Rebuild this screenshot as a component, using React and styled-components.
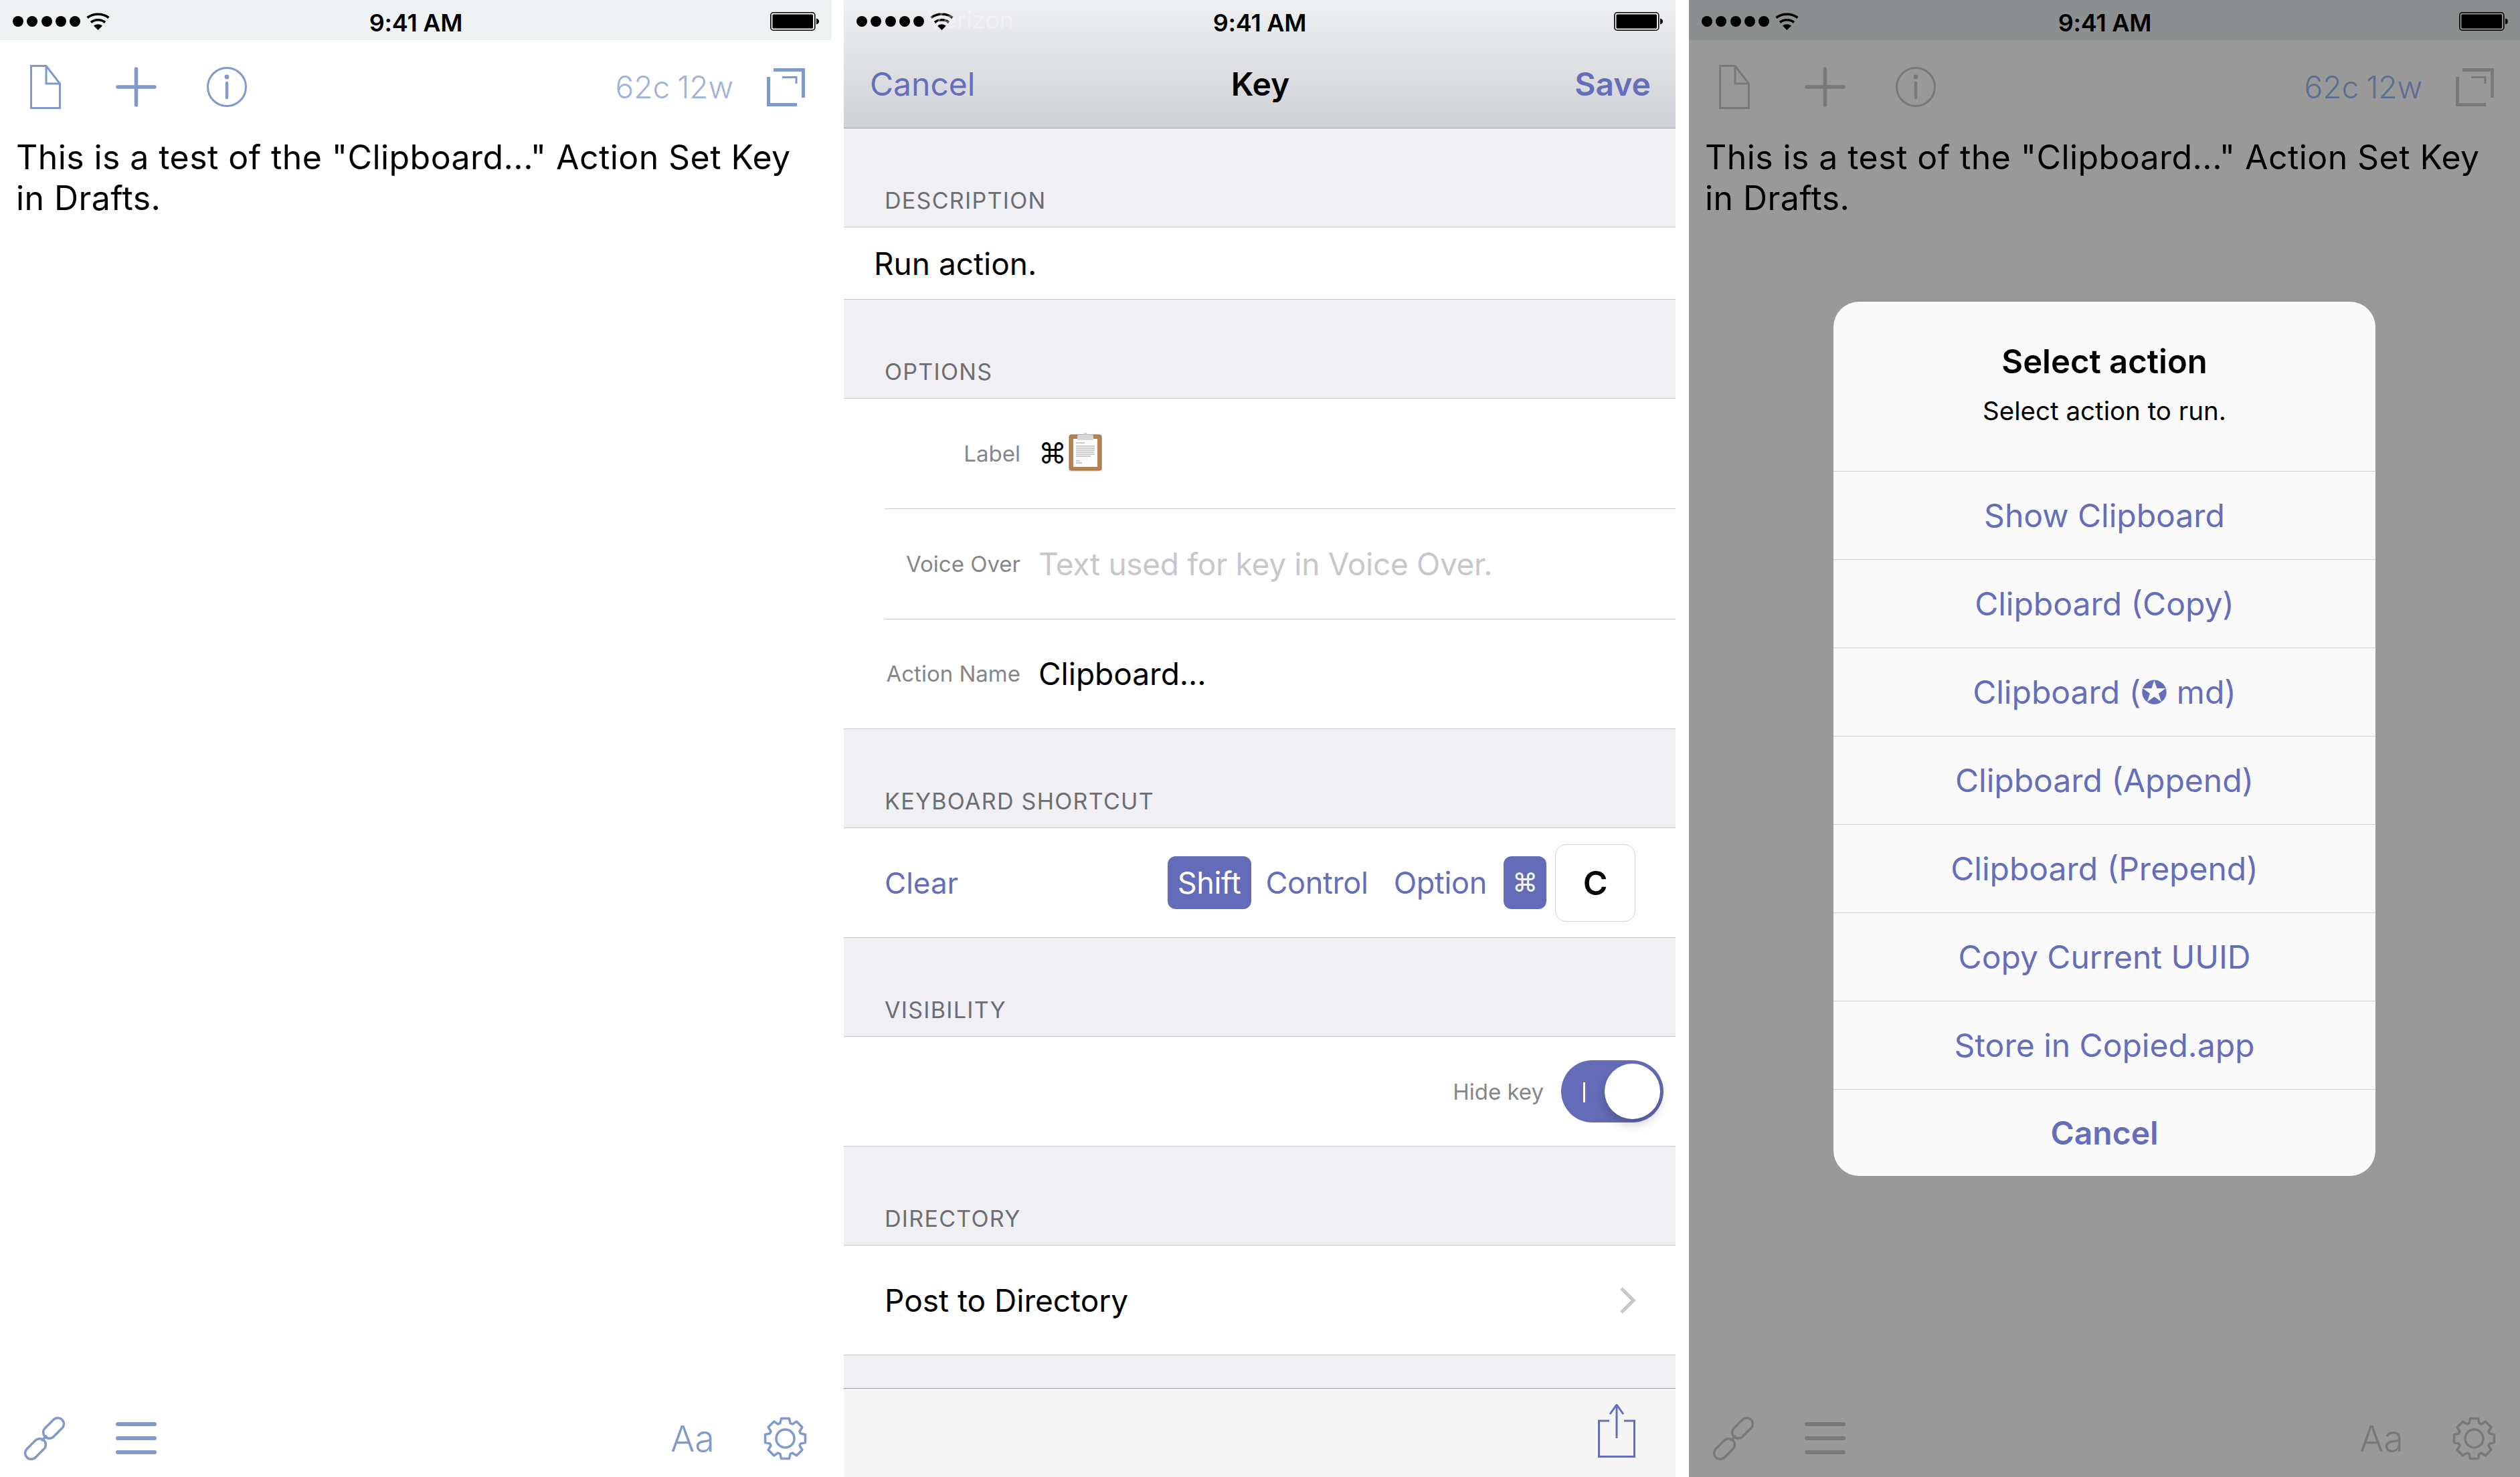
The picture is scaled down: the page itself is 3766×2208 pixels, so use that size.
import React from "react";
import styled, { createGlobalStyle } from "styled-components";

const TINT = "#7f9acb";
const DIM_TINT = "#cacaca";
const PURPLE = "#646ebb";
const LINE = "#c8c7cc";

const Global = createGlobalStyle`
  * { box-sizing: border-box; }
  html, body { margin: 0; padding: 0; background: #fff; }
  body { font-family: Inter, "Noto Sans", "DejaVu Sans", sans-serif; color: #000; }
`;

const Page = styled.div`
  width: 3766px;
  height: 2208px;
  display: flex;
  overflow: hidden;
  background: #fff;
`;

const Phone = styled.div`
  position: relative;
  flex: none;
  width: 1243px;
  margin-left: ${(p) => p.$gap || 0}px;
  height: 2208px;
  display: flex;
  flex-direction: column;
  background: #fff;
  overflow: hidden;
`;

/* status bar */
const Status = styled.div`
  position: relative;
  height: 60px;
  flex: none;
  padding: 0 19px;
  display: grid;
  grid-template-columns: 1fr auto 1fr;
  align-items: center;
  background: ${(p) => p.$bg || "transparent"};
`;

const Signal = styled.div`
  display: flex;
  align-items: center;
  gap: 5.3px;
  svg { margin-left: 4px; margin-top: -2px; }
`;

const Dot = styled.span`
  width: 16px;
  height: 16px;
  border-radius: 50%;
  background: #000;
`;

const Clock = styled.div`
  font-size: 36px;
  font-weight: 600;
  letter-spacing: -0.2px;
  line-height: 60px;
  padding-top: 4px;
`;

const Ghost = styled.span`
  position: absolute;
  left: 125px;
  top: 8px;
  font-size: 36px;
  color: rgba(255, 255, 255, 0.35);
`;

const BatterySlot = styled.div`
  justify-self: end;
  display: flex;
`;

const StatusBar = ({ bg, ghost }) => (
  <Status $bg={bg}>
    {ghost && <Ghost>Verizon</Ghost>}
    <Signal>
      <Dot /><Dot /><Dot /><Dot /><Dot />
      <svg width="36" height="27" viewBox="0 0 36 27">
        <path d="M1.5 8.5C10 1.5 25 1.5 33.5 8.5M7 15.5C13 10.5 22 10.5 28 15.5" fill="none" stroke="#000" strokeWidth="3.6" />
        <path d="M11 20.5C15 17.5 20 17.5 24 20.5L17.5 27Z" fill="#000" />
      </svg>
    </Signal>
    <Clock>9:41 AM</Clock>
    <BatterySlot>
      <svg width="73" height="28" viewBox="0 0 73 28">
        <rect x="0.8" y="0.8" width="66" height="26.4" rx="4" fill="none" stroke="#000" strokeWidth="1.6" />
        <rect x="3.5" y="3.5" width="60.5" height="21" rx="1.5" fill="#000" />
        <path d="M69 9.5C71.5 10 73 12 73 14C73 16 71.5 18 69 18.5Z" fill="#000" />
      </svg>
    </BatterySlot>
  </Status>
);

/* drafts editor */
const TopBar = styled.div`
  height: 140px;
  flex: none;
  display: flex;
  align-items: center;
  padding: 0 40px 0 45px;
`;

const IconGroup = styled.div`
  display: flex;
  align-items: center;
  gap: ${(p) => p.$gap}px;
`;

const Counter = styled.div`
  margin-left: auto;
  margin-right: 50px;
  font-size: 46px;
  font-weight: 300;
  letter-spacing: 0;
  word-spacing: -2px;
  color: ${(p) => p.$color};
`;

const Draft = styled.div`
  padding: 5px 40px 0 24px;
  font-size: 50px;
  line-height: 61px;
  letter-spacing: 0.42px;
`;

const BottomBar = styled.div`
  margin-top: auto;
  height: 116px;
  flex: none;
  display: flex;
  align-items: center;
  justify-content: space-between;
  padding: 0 36px 0 33px;
`;

const FontButton = styled.span`
  font-size: 54px;
  font-weight: 300;
  color: ${(p) => p.$color};
`;

const gearPath = () => {
  const pts = [];
  const teeth = 8;
  for (let i = 0; i < teeth; i++) {
    const a = (i * Math.PI * 2) / teeth - Math.PI / 2;
    const step = Math.PI / teeth;
    [[-0.82, 24], [-0.5, 30.5], [0.5, 30.5], [0.82, 24]].forEach(([o, r]) => {
      const t = a + o * step;
      pts.push(`${(33.5 + r * Math.cos(t)).toFixed(1)} ${(33.5 + r * Math.sin(t)).toFixed(1)}`);
    });
  }
  return "M" + pts.join("L") + "Z";
};

const DocIcon = ({ c }) => (
  <svg width="46" height="66" viewBox="0 0 46 66" fill="none" stroke={c} strokeWidth="3">
    <path d="M1.5 1.5H24L44.5 28V64.5H1.5Z" />
    <path d="M24 1.5V28H44.5" />
  </svg>
);
const PlusIcon = ({ c }) => (
  <svg width="61" height="60" viewBox="0 0 61 60" fill="none" stroke={c} strokeWidth="5.5" strokeLinecap="round">
    <path d="M30.5 3V57M3 30H58" />
  </svg>
);
const InfoIcon = ({ c }) => (
  <svg width="60" height="60" viewBox="0 0 60 60" fill="none" stroke={c}>
    <circle cx="30" cy="30" r="28.5" strokeWidth="3" />
    <path d="M30 24V46" strokeWidth="4.5" strokeLinecap="round" />
    <circle cx="30" cy="15" r="3.4" fill={c} stroke="none" />
  </svg>
);
const CopyIcon = ({ c }) => (
  <svg width="57" height="57" viewBox="0 0 57 57" fill="none" stroke={c} strokeWidth="5">
    <path d="M10 2.5H54.5V44" />
    <path d="M2.5 13V54.5H45" />
    <path d="M23 13.5H44V23" strokeWidth="3" />
  </svg>
);
const LinkIcon = ({ c }) => (
  <svg width="67" height="67" viewBox="0 0 67 67" fill="none" stroke={c} strokeWidth="3.5">
    <rect x="29" y="9" width="36" height="18" rx="9" transform="rotate(-45 47 18)" />
    <rect x="2" y="40" width="36" height="18" rx="9" transform="rotate(-45 20 49)" />
    <path d="M29 37L37 29" />
  </svg>
);
const MenuIcon = ({ c }) => (
  <svg width="61" height="48" viewBox="0 0 61 48" fill="none" stroke={c} strokeWidth="6" strokeLinecap="round">
    <path d="M3 3H58M3 24H58M3 45H58" />
  </svg>
);
const GearIcon = ({ c }) => (
  <svg width="67" height="67" viewBox="0 0 67 67" fill="none" stroke={c} strokeWidth="3.5" strokeLinejoin="round">
    <path d={gearPath()} />
    <circle cx="33.5" cy="33.5" r="13.5" />
  </svg>
);

const Editor = ({ icon, counter }) => (
  <>
    <TopBar>
      <IconGroup $gap={82}>
        <DocIcon c={icon} />
        <IconGroup $gap={75}>
          <PlusIcon c={icon} />
          <InfoIcon c={icon} />
        </IconGroup>
      </IconGroup>
      <Counter $color={counter}>62c 12w</Counter>
      <CopyIcon c={icon} />
    </TopBar>
    <Draft>This is a test of the "Clipboard..." Action Set Key in Drafts.</Draft>
    <BottomBar>
      <IconGroup $gap={73}>
        <LinkIcon c={icon} />
        <MenuIcon c={icon} />
      </IconGroup>
      <IconGroup $gap={72}>
        <FontButton $color={icon}>Aa</FontButton>
        <GearIcon c={icon} />
      </IconGroup>
    </BottomBar>
  </>
);

/* key editor */
const KeyPane = styled(Phone)`
  background: #efeff4;
`;

const NavWrap = styled.div`
  height: 192px;
  flex: none;
  background: linear-gradient(#eff0f2, #d0d1d6);
  border-bottom: 1px solid #a2a2a7;
`;

const Nav = styled.div`
  height: 130px;
  display: grid;
  grid-template-columns: 1fr auto 1fr;
  align-items: center;
  padding: 0 37px 0 39px;
  font-size: 48px;
`;

const NavLink = styled.span`
  color: ${PURPLE};
  font-weight: ${(p) => (p.$bold ? 600 : 400)};
  text-align: ${(p) => (p.$end ? "right" : "left")};
`;

const NavTitle = styled.span`
  font-weight: 600;
`;

const SectionLabel = styled.div`
  height: 147px;
  flex: none;
  display: flex;
  align-items: flex-end;
  padding: 0 0 17px 61px;
  font-size: 34px;
  line-height: 44px;
  letter-spacing: 1.3px;
  color: #6d6d72;
`;

const Group = styled.div`
  flex: none;
  background: #fff;
  border-top: 1px solid ${LINE};
  border-bottom: 1px solid ${LINE};
`;

const Row = styled.div`
  height: ${(p) => p.$h || 163}px;
  display: flex;
  align-items: center;
  padding: ${(p) => p.$pad || "0 60px 0 61px"};
  font-size: 46px;
`;

const FieldRow = styled(Row)`
  height: 164px;
  margin-left: 61px;
  padding: 0;
  & + & {
    height: 164.5px;
    border-top: 1px solid ${LINE};
  }
`;

const FieldLabel = styled.div`
  width: 203px;
  margin-right: 27px;
  text-align: right;
  font-size: 33px;
  color: #86868a;
`;

const Placeholder = styled.span`
  letter-spacing: -0.3px;
  color: #c7c7cd;
`;

const Cmd = styled.span`
  font-family: "DejaVu Sans", sans-serif;
  font-size: ${(p) => p.$size || 42}px;
`;

const ClipWrap = styled.span`
  display: flex;
  margin-left: 3px;
  margin-top: -4px;
`;

const ClearLink = styled.span`
  font-size: 44px;
  color: ${PURPLE};
`;

const Keys = styled.div`
  margin-left: auto;
  display: flex;
  align-items: center;
  font-size: 45px;
  letter-spacing: -0.3px;
  color: ${PURPLE};
`;

const Modifier = styled.span`
  height: 79px;
  min-width: ${(p) => p.$w || 0}px;
  display: flex;
  align-items: center;
  justify-content: center;
  margin-right: ${(p) => p.$mr}px;
  color: ${(p) => (p.$on ? "#fff" : PURPLE)};
  background: ${(p) => (p.$on ? "#646cb9" : "transparent")};
  border-radius: 12px;
`;

const KeyCap = styled.span`
  width: 120px;
  height: 116px;
  margin-left: 13px;
  display: flex;
  align-items: center;
  justify-content: center;
  border: 1px solid #d0d0d2;
  border-radius: 16px;
  color: #000;
  font-weight: 600;
  font-size: 50px;
`;

const ToggleRow = styled(Row)`
  justify-content: flex-end;
  padding: 0 18px 0 0;
`;

const ToggleLabel = styled.span`
  margin-right: 26px;
  font-size: 33px;
  color: #86868a;
`;

const Toggle = styled.span`
  position: relative;
  width: 153px;
  height: 93px;
  border-radius: 47px;
  background: #646cb9;
  &::before {
    content: "";
    position: absolute;
    left: 33px;
    top: 33px;
    width: 3px;
    height: 30px;
    background: #fff;
  }
  &::after {
    content: "";
    position: absolute;
    right: 5px;
    top: 5px;
    width: 83px;
    height: 83px;
    border-radius: 50%;
    background: #fff;
    box-shadow: 0 7px 16px rgba(0, 0, 0, 0.22);
  }
`;

const Spacer = styled.div`
  flex: 1;
`;

const Footer = styled.div`
  height: 133px;
  flex: none;
  display: flex;
  align-items: center;
  justify-content: flex-end;
  padding-right: 60px;
  background: #f5f5f6;
  border-top: 1px solid #a2a2a7;
  svg { margin-top: -6px; }
`;

const KeyEditor = () => (
  <KeyPane $gap={18}>
    <NavWrap>
      <StatusBar ghost />
      <Nav>
        <NavLink>Cancel</NavLink>
        <NavTitle>Key</NavTitle>
        <NavLink $bold $end>Save</NavLink>
      </Nav>
    </NavWrap>

    <SectionLabel>DESCRIPTION</SectionLabel>
    <Group>
      <Row $h={107} $pad="0 45px">Run action.</Row>
    </Group>

    <SectionLabel>OPTIONS</SectionLabel>
    <Group>
      <FieldRow>
        <FieldLabel>Label</FieldLabel>
        <Cmd>⌘</Cmd>
        <ClipWrap>
          <svg width="50" height="58" viewBox="0 0 50 58">
            <rect x="0" y="52" width="50" height="6" fill="#e8e5e2" />
            <rect x="1" y="3" width="48" height="53" rx="3" fill="#b5834f" stroke="#96693a" />
            <rect x="7" y="9" width="36" height="42" fill="#fbfbfb" />
            <circle cx="25" cy="3" r="3" fill="#c9c9cb" />
            <rect x="13" y="3" width="24" height="8" rx="1.5" fill="#d8d8da" />
            <path d="M11 15H24M11 20H39M11 23H39M11 26H39M11 29H38M11 32H39M11 35H33M11 42H17M11 45H20" stroke="#9c9c9c" strokeWidth="1" />
          </svg>
        </ClipWrap>
      </FieldRow>
      <FieldRow>
        <FieldLabel>Voice Over</FieldLabel>
        <Placeholder>Text used for key in Voice Over.</Placeholder>
      </FieldRow>
      <FieldRow>
        <FieldLabel>Action Name</FieldLabel>
        <span>Clipboard...</span>
      </FieldRow>
    </Group>

    <SectionLabel>KEYBOARD SHORTCUT</SectionLabel>
    <Group>
      <Row>
        <ClearLink>Clear</ClearLink>
        <Keys>
          <Modifier $on $w={125} $mr={22}>Shift</Modifier>
          <Modifier $mr={38}>Control</Modifier>
          <Modifier $mr={25}>Option</Modifier>
          <Modifier $on $w={64} $mr={0}><Cmd $size={38}>⌘</Cmd></Modifier>
          <KeyCap>C</KeyCap>
        </Keys>
      </Row>
    </Group>

    <SectionLabel>VISIBILITY</SectionLabel>
    <Group>
      <ToggleRow>
        <ToggleLabel>Hide key</ToggleLabel>
        <Toggle />
      </ToggleRow>
    </Group>

    <SectionLabel>DIRECTORY</SectionLabel>
    <Group>
      <Row>
        <span>Post to Directory</span>
        <Spacer />
        <svg width="24" height="40" viewBox="0 0 24 40" fill="none" stroke="#c7c7cc" strokeWidth="5">
          <path d="M3 2L21 20L3 38" />
        </svg>
      </Row>
    </Group>

    <Spacer />
    <Footer>
      <svg width="56" height="80" viewBox="0 0 56 80" fill="none" stroke={PURPLE} strokeWidth="3">
        <path d="M17 25H1.5V78.5H54.5V25H39" />
        <path d="M28 1V51M18 15L28 1L38 15" />
      </svg>
    </Footer>
  </KeyPane>
);

/* action alert */
const Dim = styled.div`
  position: absolute;
  inset: 0;
  display: flex;
  align-items: center;
  justify-content: center;
  padding-right: 1px;
  background: rgba(0, 0, 0, 0.4);
`;

const Alert = styled.div`
  width: 810px;
  border-radius: 38px;
  overflow: hidden;
  background: #fafafb;
`;

const AlertHead = styled.div`
  height: 253px;
  padding-top: 62px;
  text-align: center;
`;

const AlertTitle = styled.div`
  font-size: 49px;
  font-weight: 600;
  line-height: 56px;
`;

const AlertText = styled.div`
  margin-top: 22px;
  font-size: 38.5px;
  line-height: 46px;
`;

const AlertButton = styled.div`
  height: ${(p) => (p.$last ? 130 : 132)}px;
  display: flex;
  align-items: center;
  justify-content: center;
  border-top: 1px solid #d2d2d8;
  font-size: 48px;
  font-weight: ${(p) => (p.$last ? 600 : 400)};
  color: ${PURPLE};
`;

const ACTIONS = [
  "Show Clipboard",
  "Clipboard (Copy)",
  "Clipboard (✪ md)",
  "Clipboard (Append)",
  "Clipboard (Prepend)",
  "Copy Current UUID",
  "Store in Copied.app",
];

export default function App() {
  return (
    <Page>
      <Global />
      <Phone>
        <StatusBar bg="#eff2f3" />
        <Editor icon={TINT} counter="#9fb3da" />
      </Phone>

      <KeyEditor />

      <Phone $gap={20}>
        <StatusBar bg="#e8eef0" />
        <Editor icon={DIM_TINT} counter="#98b8f5" />
        <Dim>
          <Alert>
            <AlertHead>
              <AlertTitle>Select action</AlertTitle>
              <AlertText>Select action to run.</AlertText>
            </AlertHead>
            {ACTIONS.map((a) => (
              <AlertButton key={a}>{a}</AlertButton>
            ))}
            <AlertButton $last>Cancel</AlertButton>
          </Alert>
        </Dim>
      </Phone>
    </Page>
  );
}
